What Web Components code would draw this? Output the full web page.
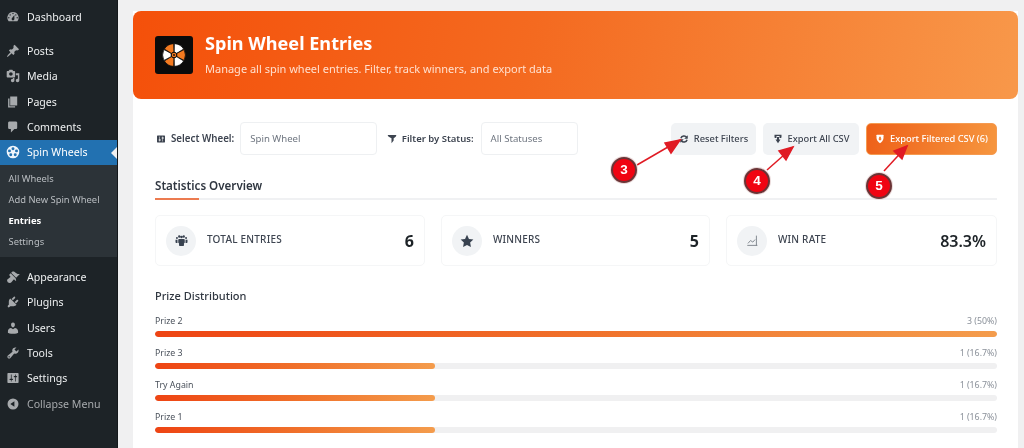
<!DOCTYPE html>
<html lang="en"><head><meta charset="utf-8"><title>Spin Wheel Entries</title>
<style>
html,body{margin:0;padding:0;height:448px;overflow:hidden;background:#f0f0f1;font-family:"Noto Sans","Open Sans",sans-serif}
body{display:flex;position:relative;filter:blur(.3px)}
</style></head><body>
<wp-sidebar>
  <wp-item icon="dashboard" gap="4.5">Dashboard</wp-item>
  <wp-item icon="pin" gap="8.5">Posts</wp-item>
  <wp-item icon="media">Media</wp-item>
  <wp-item icon="page">Pages</wp-item>
  <wp-item icon="comment">Comments</wp-item>
  <wp-item icon="wheel" current>Spin Wheels</wp-item>
  <wp-submenu>
    <wp-subitem>All Wheels</wp-subitem>
    <wp-subitem>Add New Spin Wheel</wp-subitem>
    <wp-subitem current>Entries</wp-subitem>
    <wp-subitem>Settings</wp-subitem>
  </wp-submenu>
  <wp-item icon="brush" gap="7.3">Appearance</wp-item>
  <wp-item icon="plugin">Plugins</wp-item>
  <wp-item icon="user">Users</wp-item>
  <wp-item icon="wrench">Tools</wp-item>
  <wp-item icon="sliders">Settings</wp-item>
  <wp-item icon="collapse" dim>Collapse Menu</wp-item>
</wp-sidebar>
<spin-page>
  <page-banner title-text="Spin Wheel Entries" sub-text="Manage all spin wheel entries. Filter, track winners, and export data"></page-banner>
  <filter-bar></filter-bar>
  <section-title>Statistics Overview</section-title>
  <stat-row>
    <stat-card icon="people" label="TOTAL ENTRIES" value="6"></stat-card>
    <stat-card icon="star" label="WINNERS" value="5"></stat-card>
    <stat-card icon="chart" label="WIN RATE" value="83.3%"></stat-card>
  </stat-row>
  <prize-list>
    <prize-bar label="Prize 2" note="3 (50%)" pct="100"></prize-bar>
    <prize-bar label="Prize 3" note="1 (16.7%)" pct="33.3"></prize-bar>
    <prize-bar label="Try Again" note="1 (16.7%)" pct="33.3"></prize-bar>
    <prize-bar label="Prize 1" note="1 (16.7%)" pct="33.3"></prize-bar>
  </prize-list>
</spin-page>
<call-outs></call-outs>
<script>
const ICONS={
dashboard:'<path fill-rule="evenodd" d="M3.76 16h12.48A7.98 7.98 0 0 0 10 3a7.98 7.98 0 0 0-6.24 13zM10 4c.55 0 1 .45 1 1s-.45 1-1 1-1-.45-1-1 .45-1 1-1zM6 6c.55 0 1 .45 1 1s-.45 1-1 1-1-.45-1-1 .45-1 1-1zm8 0c.55 0 1 .45 1 1s-.45 1-1 1-1-.45-1-1 .45-1 1-1zm-5.37 5.55L12 7v6c0 1.1-.9 2-2 2s-2-.9-2-2c0-.57.24-1.08.63-1.45zM4 10c.55 0 1 .45 1 1s-.45 1-1 1-1-.45-1-1 .45-1 1-1zm12 0c.55 0 1 .45 1 1s-.45 1-1 1-1-.45-1-1 .45-1 1-1z"/>',
pin:'<path d="M10.44 3.02l1.82-1.82 6.36 6.35-1.83 1.82c-1.05-.68-2.48-.57-3.41.36l-.75.75c-.92.93-1.04 2.35-.35 3.41l-1.83 1.82-2.41-2.41-2.8 2.79c-.42.42-3.38 2.71-3.8 2.29s1.86-3.39 2.28-3.81l2.79-2.79L4.1 9.360l1.83-1.82c1.05.69 2.48.57 3.4-.36l.75-.75c.93-.92 1.05-2.35.36-3.41z"/>',
media:'<path fill-rule="evenodd" d="M13 11V4c0-.55-.45-1-1-1h-1.67L9 1H5L3.67 3H2c-.55 0-1 .45-1 1v7c0 .55.45 1 1 1h10c.55 0 1-.45 1-1zM7 4.500c1.38 0 2.5 1.12 2.5 2.5S8.38 9.500 7 9.500 4.500 8.38 4.500 7 5.620 4.500 7 4.500zM14 6h5v10.500c0 1.38-1.12 2.5-2.500 2.500S14 17.880 14 16.500s1.120-2.500 2.500-2.500c.17 0 .34.02.5.05V9h-3V6zm-4 8.050V13h2v3.500c0 1.38-1.120 2.500-2.500 2.500S7 17.880 7 16.500 8.120 14 9.500 14c.17 0 .34.02.5.05z"/>',
page:'<path d="M6 15V2h10v13H6zm-1 1h8v2H3V5h2v11z"/>',
comment:'<path d="M5 2h9c1.100 0 2 .9 2 2v7c0 1.100-.9 2-2 2h-2l-5 5v-5H5c-1.100 0-2-.9-2-2V4c0-1.100.9-2 2-2z"/>',
wheel:'<path fill-rule="evenodd" d="M10 1a9 9 0 1 0 0 18 9 9 0 0 0 0-18zM10 3.200a2.100 2.100 0 1 1 0 4.200 2.100 2.100 0 0 1 0-4.200zM5 6.300a2.100 2.100 0 1 1 0 4.200 2.100 2.100 0 0 1 0-4.200zM15 6.300a2.100 2.100 0 1 1 0 4.200 2.100 2.100 0 0 1 0-4.200zM6.800 11.800a2.100 2.100 0 1 1 0 4.200 2.100 2.100 0 0 1 0-4.200zM13.200 11.800a2.100 2.100 0 1 1 0 4.200 2.100 2.100 0 0 1 0-4.200z"/>',
brush:'<path d="M14.480 11.060L7.410 3.990l1.500-1.500c.5-.56 2.300-.47 3.510.32 1.210.8 1.430 1.280 2.910 2.100 1.180.64 2.450 1.260 4.450.85zm-.71.71L6.700 4.700 4.930 6.470c-.39.39-.39 1.020 0 1.410l1.060 1.060c.39.39.39 1.030 0 1.420-.6.6-1.430 1.110-2.210 1.690-.35.26-.7.53-1.010.84C1.430 13.230.99 15.270 2.500 17.500c2.200 1.510 4.270 1.060 5.610-.28.31-.31.58-.66.84-1.010.58-.78 1.090-1.610 1.690-2.210.39-.39 1.030-.39 1.420 0l1.060 1.060c.39.39 1.020.39 1.410 0z"/>',
plugin:'<path d="M13.110 4.360L9.870 7.600 8 5.730l3.240-3.240c.35-.34 1.050-.2 1.560.32.52.51.66 1.210.31 1.550zm-8 1.770l.91-1.120 9.010 9.010-1.190.84c-.71.71-2.630 1.160-3.820 1.160H6.140L4.900 17.260c-.59.59-1.540.59-2.120 0-.59-.58-.59-1.530 0-2.120l1.240-1.240v-3.880c0-1.130.4-3.190 1.090-3.890zm7.260 3.970l3.240-3.240c.34-.35 1.040-.21 1.550.31.52.51.66 1.210.31 1.550l-3.240 3.250z"/>',
user:'<path d="M10 9.250c-2.270 0-2.730-3.440-2.730-3.440C7 4.020 7.820 2 9.970 2c2.160 0 2.980 2.020 2.710 3.810 0 0-.41 3.440-2.680 3.440zm0 2.570L12.720 10c2.390 0 4.520 2.330 4.520 4.530v2.490s-3.650 1.130-7.240 1.130c-3.650 0-7.240-1.130-7.240-1.130v-2.490c0-2.250 1.940-4.480 4.470-4.480z"/>',
wrench:'<path fill-rule="evenodd" d="M16.680 9.770c-1.340 1.340-3.300 1.670-4.950.99l-5.410 6.520c-.99.99-2.590.99-3.580 0s-.99-2.590 0-3.570l6.520-5.420c-.68-1.650-.35-3.610.99-4.950 1.280-1.280 3.120-1.620 4.720-1.060l-2.890 2.890 2.820 2.820 2.860-2.870c.53 1.580.18 3.390-1.080 4.650zM3.810 16.210c.4.39 1.040.39 1.430 0 .4-.4.4-1.040 0-1.430-.39-.4-1.030-.4-1.430 0-.39.39-.39 1.030 0 1.430z"/>',
sliders:'<path fill-rule="evenodd" d="M18 16V4c0-.55-.45-1-1-1H3c-.55 0-1 .45-1 1v12c0 .55.45 1 1 1h14c.55 0 1-.45 1-1zM8 11h1c.55 0 1 .45 1 1s-.45 1-1 1H8v1.500c0 .28-.22.5-.5.5s-.5-.22-.5-.5V13H6c-.55 0-1-.45-1-1s.45-1 1-1h1V5.500c0-.28.22-.5.5-.5s.5.22.5.5V11zm5-2h-1c-.55 0-1-.45-1-1s.45-1 1-1h1V5.500c0-.28.22-.5.5-.5s.5.22.5.5V7h1c.55 0 1 .45 1 1s-.45 1-1 1h-1v5.500c0 .28-.22.5-.5.5s-.5-.22-.5-.5V9z"/>',
collapse:'<path fill-rule="evenodd" d="M10 2.160a7.840 7.840 0 1 1 0 15.680 7.840 7.840 0 0 1 0-15.680zM12 13.880V6.120L6.180 10z"/>',
filter:'<path d="M1.500 2h17c.3 2.600-1.800 5-5.200 6.300V13L9 18.500V8.300C5 7 1.200 4.600 1.500 2z"/>',
people:'<path d="M6.500 2a1.800 1.800 0 1 1 0 3.600 1.800 1.800 0 0 1 0-3.600zM13.500 2a1.800 1.800 0 1 1 0 3.600 1.800 1.800 0 0 1 0-3.600zM10 2.800a1.800 1.800 0 1 1 0 3.600 1.800 1.800 0 0 1 0-3.600zM3 4.800a1.500 1.500 0 1 1 0 3 1.500 1.500 0 0 1 0-3zM17 4.800a1.500 1.500 0 1 1 0 3 1.500 1.500 0 0 1 0-3zM6.500 7.500h7c1 0 1.500.8 1.500 1.700V13c0 .8-.6 1.300-1.200 1.300V18c-2.500.6-5.100.6-7.600 0v-3.700c-.6 0-1.200-.5-1.200-1.300V9.200c0-.9.5-1.700 1.500-1.700zM.8 8.800h3v5H2c-.7 0-1.200-.5-1.200-1.100zM19.200 8.800h-3v5H18c.7 0 1.200-.5 1.200-1.100z"/>',
star:'<path d="M10 1.200l2.800 5.800 6.300.9-4.600 4.400 1.100 6.300L10 15.600l-5.600 3 1.100-6.300L.9 7.900l6.300-.9z"/>',
chart:'<path fill="none" stroke="currentColor" stroke-width="1.200" d="M2 17.500h15.500M3 14.500l4-4.500 3.500 2.500 3.500-4M16 2.500v15"/>',
reset:'<path fill="none" stroke="currentColor" stroke-width="3" d="M3.800 8.500A6.500 6.500 0 0 1 15.500 7M16.200 11.500A6.500 6.500 0 0 1 4.500 13"/><path d="M17.500 2.500v7h-7zM2.500 17.500v-7h7z"/>',
download:'<path d="M3 1.500h14v5c0 .8-.6 1.500-1.400 1.500H13V4H7v4H4.400C3.600 8 3 7.300 3 6.500zM8 6h4v5h3l-5 7.500L5 11h3z"/>',
shield:'<path d="M4 1.500h12c.6 0 1 .4 1 1V8c0 4.500-3.500 8-7 10.500-3.500-2.500-7-6-7-10.500V2.500c0-.6.4-1 1-1z"/><path fill="#f0762a" d="M8.300 5.500h3.400v4h2L10 13.500l-3.700-4h2z"/>'
};
const svg=(n,s)=>`<svg viewBox="0 0 20 20" width="${s}" height="${s}" fill="currentColor" aria-hidden="true">${ICONS[n]}</svg>`;
function def(name,css,html,init){
  customElements.define(name,class extends HTMLElement{
    connectedCallback(){
      if(this.shadowRoot)return;
      const r=this.attachShadow({mode:'open'});
      r.innerHTML=`<style>${css}</style>`+(typeof html==='function'?html(this):html);
      if(init)init(this,r);
    }
  });
}
def('wp-sidebar',':host{display:block;width:117px;flex:none;height:448px;background:#1d2327;border-right:1px solid #14181b;box-sizing:content-box}','<slot></slot>');
def('wp-item',`:host{display:flex;align-items:center;height:25.33px;font-size:10.6px;color:#eef0f1;position:relative;box-sizing:border-box}
 .i{width:14px;height:14px;margin:0 7px 0 6px;color:#a7aaad;display:flex;flex:none}
 :host([current]){background:#2271b1;color:#fff}
 :host([current]) .i{color:#f0f6fc}
 :host([dim]){color:#a7aaad}
 .n{display:none;position:absolute;right:0;top:7px;border:6px solid transparent;border-right-color:#f0f0f1;border-left:0}
 :host([current]) .n{display:block}`,
 h=>`<span class="i">${svg(h.getAttribute('icon'),14)}</span><slot></slot><span class="n"></span>`,
 h=>{const g=h.getAttribute('gap');if(g)h.style.marginTop=g+'px';});
def('wp-submenu',':host{display:block;background:#2c3338;padding:3.5px 0 4.5px}','<slot></slot>');
def('wp-subitem',`:host{display:flex;align-items:center;height:21px;padding-left:8.5px;font-size:9.4px;color:#b9bdc1}
 :host([current]){color:#fff;font-weight:700}`,'<slot></slot>');
def('spin-page',`:host{display:block;width:885px;height:437px;margin:11px 0 0 15px;background:#fff;flex:none;box-sizing:border-box}`,'<slot></slot>');
const wedge='M0 0L-5.400-10A11.400 11.400 0 0 1 5.400-10Z';
def('page-banner',`:host{display:flex;align-items:center;height:88px;border-radius:8px;background:linear-gradient(100deg,#f4500a 0%,#f46a20 45%,#f8984a 100%);padding-left:22px;box-sizing:border-box;color:#fff;gap:12px}
 .logo{width:38px;height:38px;background:#0b0b0b;border-radius:3px;flex:none;display:flex;align-items:center;justify-content:center}
 h1{margin:0;font-size:18.1px;line-height:24px;font-weight:700}
 p{margin:5.5px 0 0;font-size:11px;line-height:16px;color:#ffe0cf}
 .t{margin-top:-2px}`,
 h=>`<div class="logo"><svg width="28" height="28" viewBox="-14 -14 28 28" aria-hidden="true">
  <g stroke="#0b0b0b" stroke-width=".7">
  <path fill="#fff" d="${wedge}" transform="rotate(30)"/>
  <path fill="#f47a20" d="${wedge}" transform="rotate(90)"/>
  <path fill="#fff" d="${wedge}" transform="rotate(150)"/>
  <path fill="#f47a20" d="${wedge}" transform="rotate(210)"/>
  <path fill="#fff" d="${wedge}" transform="rotate(270)"/>
  <path fill="#f47a20" d="${wedge}" transform="rotate(330)"/>
  </g><circle r="2.800" fill="#f47a20" stroke="#0b0b0b" stroke-width="1.100"/><circle r=".9" fill="#0b0b0b"/></svg></div>
  <div class="t"><h1>${h.getAttribute('title-text')}</h1><p>${h.getAttribute('sub-text')}</p></div>`);
def('filter-bar',`:host{display:flex;align-items:center;height:33px;margin:23px 21px 0 23px;font-size:10px;color:#3c434a}
 label{display:flex;align-items:center;gap:5px;font-weight:600;font-size:9.75px;color:#3d4450;white-space:nowrap}
 label.f{font-size:9.5px;gap:4.500px}
 label svg{flex:none}
 .sel{height:33px;box-sizing:border-box;border:1px solid #eef0f2;border-radius:4px;display:flex;align-items:center;padding-left:9px;color:#6f7680;font-size:9.6px;background:#fff}
 .a{width:137px;margin:0 10px 0 6px}.b{width:97px;margin-left:7px}
 .sp{flex:1}`,
 ()=>`<label>${svg('sliders',10)}Select Wheel:</label><div class="sel a">Spin Wheel</div>
 <label class="f">${svg('filter',10)}Filter by Status:</label><div class="sel b">All Statuses</div><span class="sp"></span>
 <action-button icon="reset" w="85" style="margin-right:7px">Reset Filters</action-button>
 <action-button icon="download" w="96" style="margin-right:7px">Export All CSV</action-button>
 <action-button icon="shield" w="131" primary>Export Filtered CSV (6)</action-button>`);
def('action-button',`:host{display:flex;align-items:center;justify-content:center;gap:5px;height:32px;box-sizing:border-box;border-radius:5px;background:#f1f3f5;color:#3d4450;font-size:9.3px;font-weight:500;white-space:nowrap;flex:none}
 :host([primary]){background:linear-gradient(100deg,#ee6018,#f6963f);color:#fff;border:1px solid #f59a50}
 svg{flex:none}`,
 h=>`${svg(h.getAttribute('icon'),10)}<slot></slot>`,
 h=>{h.style.width=h.getAttribute('w')+'px';});
def('section-title',`:host{display:block;margin:23px 21px 0 22px;height:20px;font-size:11.6px;line-height:16px;font-weight:600;color:#2f3640;border-bottom:2px solid #f0f1f3;position:relative}
 :host::after{content:"";position:absolute;left:0;bottom:-2px;width:44px;height:2px;background:#ec7b50}`,'<slot></slot>');
def('stat-row',':host{display:grid;grid-template-columns:270px 269px 271px;gap:16px;margin:15px 21px 0 22px}','<slot></slot>');
def('stat-card',`:host{display:flex;height:51px;box-sizing:border-box;border:1px solid #f5f6f7;border-radius:5px;align-items:center;padding:0 10px;background:#fff}
 .c{width:30px;height:30px;border-radius:50%;background:#f1f3f5;display:flex;align-items:center;justify-content:center;color:#384250;flex:none}
 .l{margin-left:11px;font-size:10px;font-weight:500;letter-spacing:.2px;color:#3d4450;flex:1;margin-top:-4px}
 .v{font-size:16px;font-weight:700;color:#1d2327;margin-top:1px}
 :host([icon=chart]) .c{color:#666d77}
 :host([icon=chart]) .v{font-weight:600}`,
 h=>`<span class="c">${svg(h.getAttribute('icon'),h.getAttribute('icon')==='star'?14:13)}</span><span class="l">${h.getAttribute('label')}</span><span class="v">${h.getAttribute('value')}</span>`);
def('prize-list',`:host{display:block;margin:20px 21px 0 22px}
 h2{margin:0 0 8px;font-size:11px;line-height:20px;font-weight:500;color:#2f3640}`,'<h2>Prize Distribution</h2><slot></slot>');
def('prize-bar',`:host{display:block;height:32px;color:#4a515b}
 .r{display:flex;justify-content:space-between;font-size:8.8px;line-height:14px;height:16.5px}
 .n{color:#8a9099}
 .t{height:6px;border-radius:3px;background:#f0f0f1;overflow:hidden}
 .f{height:100%;border-radius:3px;background:linear-gradient(90deg,#ee4413,#f0702a 50%,#f49c4c)}`,
 h=>`<div class="r"><span>${h.getAttribute('label')}</span><span class="n">${h.getAttribute('note')}</span></div><div class="t"><div class="f" style="width:${h.getAttribute('pct')}%"></div></div>`);
def('call-outs',':host{position:absolute;left:0;top:0;width:1024px;height:448px;pointer-events:none;display:block}svg{position:absolute;left:0;top:0}',
 `<svg width="1024" height="448" aria-hidden="true">
  <g stroke="#e01b24" stroke-width="1.500" fill="#e01b24">
   <path d="M637 165L680 140"/><path d="M680 140L665 143L671 153Z"/>
   <path d="M767 170L793 147"/><path d="M793 147L779 151L786 160Z"/>
   <path d="M884 171L907 146"/><path d="M907 146L894 151L902 159Z"/>
  </g></svg>
  <num-badge style="left:611px;top:157px">3</num-badge>
  <num-badge style="left:744px;top:168px">4</num-badge>
  <num-badge style="left:866px;top:173px">5</num-badge>`);
def('num-badge',`:host{position:absolute;width:26px;height:26px;box-sizing:border-box;border-radius:50%;background:#f00412;border:2px solid #6a3436;box-shadow:0 0 0 1px #eadada;color:#fff;font:700 13.5px/22px "Liberation Sans",sans-serif;text-align:center}`,'<slot></slot>');
</script>
</body></html>
